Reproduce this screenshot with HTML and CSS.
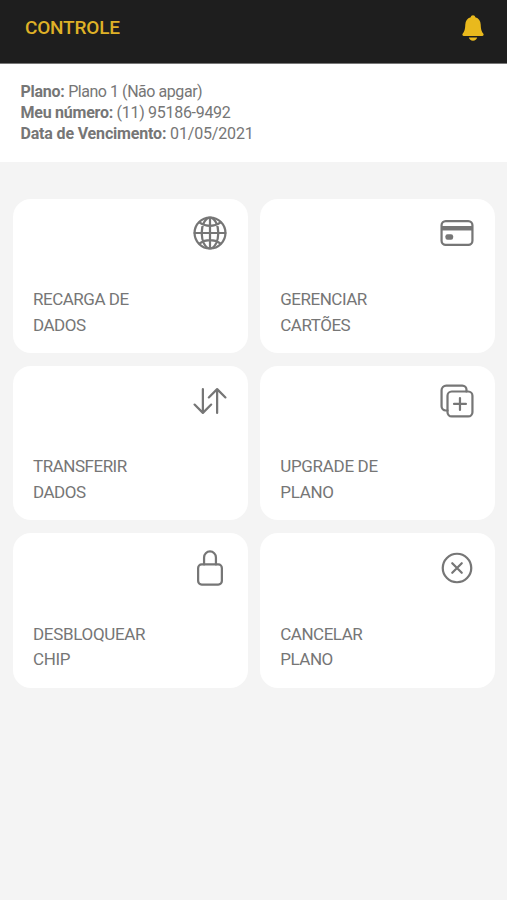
FILE: index.html
```html
<!DOCTYPE html>
<html lang="pt-BR">
<head>
  <meta charset="UTF-8">
  <meta name="viewport" content="width=device-width, initial-scale=1.0">
  <title>Controle</title>
  <link rel="stylesheet" href="styles.css">
</head>
<body>
  <header class="header">
    <h1>CONTROLE</h1>
    <svg class="bell" viewBox="0 0 24 28">
      <path d="M12 1.300c1.300 0 2.100.8 2.300 1.900 3.600 1 5.200 3.800 5.400 7.300.2 5.200.9 6.900 2.500 9 .8 1.100.5 2.400-1.100 2.400H2.900c-1.600 0-1.900-1.300-1.100-2.400 1.600-2.100 2.300-3.800 2.500-9 .2-3.500 1.800-6.300 5.400-7.300C9.900 2.100 10.700 1.300 12 1.300z"/>
      <path d="M7.800 23.500h8.400c-.5 1.900-2.100 3.300-4.200 3.300s-3.700-1.400-4.200-3.300z"/>
    </svg>
  </header>

  <!-- Dados do plano -->
  <section class="info">
    <p class="plano"><strong>Plano:</strong> Plano 1 (Não apgar)</p>
    <p class="numero"><strong>Meu número:</strong> (11) 95186-9492</p>
    <p class="vencimento"><strong>Data de Vencimento:</strong> 01/05/2021</p>
  </section>

  <!-- Menu -->
  <main class="menu">
    <a class="card">
      <svg class="icon" viewBox="0 0 512 512">
        <circle cx="256" cy="256" r="208"/>
        <path d="M256 48c-58 0-112 93-112 208s54 208 112 208 112-93 112-208S314 48 256 48zM117 117c38 27 87 43 139 43s101-16 139-43M395 395c-38-27-87-43-139-43s-101 16-139 43M256 48v416M464 256H48"/>
      </svg>
      <span>RECARGA DE<br>DADOS</span>
    </a>
    <a class="card">
      <svg class="icon" viewBox="0 0 512 512">
        <rect x="48" y="96" width="416" height="320" rx="56"/>
        <path class="stripe" d="M48 192h416"/>
        <path class="stripe chip" d="M128 300h48v20h-48z"/>
      </svg>
      <span>GERENCIAR<br>CARTÕES</span>
    </a>
    <a class="card">
      <svg class="icon" viewBox="0 0 512 512">
        <path d="M464 208L352 96 240 208M352 113v303M48 304l112 112 112-112M160 398V96"/>
      </svg>
      <span>TRANSFERIR<br>DADOS</span>
    </a>
    <a class="card wide">
      <svg class="icon" viewBox="0 0 512 512">
        <rect x="128" y="128" width="336" height="336" rx="57"/>
        <path d="M383 128l1-24a56 56 0 0 0-56-56H112a64 64 0 0 0-64 64v216a56 56 0 0 0 56 56h24M296 216v160M376 296H216"/>
      </svg>
      <span>UPGRADE DE<br>PLANO</span>
    </a>
    <a class="card wide">
      <svg class="icon" viewBox="0 0 512 512">
        <path d="M336 208v-95a80 80 0 0 0-160 0v95"/>
        <rect x="96" y="208" width="320" height="272" rx="48"/>
      </svg>
      <span>DESBLOQUEAR<br>CHIP</span>
    </a>
    <a class="card">
      <svg class="icon" viewBox="0 0 512 512">
        <circle cx="256" cy="256" r="192"/>
        <path d="M320 320L192 192M192 320l128-128"/>
      </svg>
      <span>CANCELAR<br>PLANO</span>
    </a>
  </main>
</body>
</html>
```

FILE: styles.css
```css
* {
  box-sizing: border-box;
}

body {
  margin: 0;
  min-height: 100vh;
  background-color: #f4f4f4;
  color: #767676;
  font-family: Roboto, "Liberation Sans", sans-serif;
}

.header {
  display: flex;
  justify-content: space-between;
  height: 63.5px;
  padding: 14px 22px 0 25px;
  background-color: #1e1e1e;
  border-bottom: 1px solid #777;
}

.header h1 {
  margin: 2px 0 0;
  color: #dfb127;
  font-size: 19px;
  font-weight: 500;
  line-height: 23px;
  letter-spacing: -0.2px;
}

.bell {
  width: 24px;
  height: 28px;
  fill: #e9b91d;
}

.info {
  height: 98px;
  padding: 17px 20.5px 0;
  background-color: #fff;
}

.info p {
  margin: 0;
  font-size: 16px;
  line-height: 21.4px;
}

.info strong {
  letter-spacing: -0.25px;
}

.plano {
  letter-spacing: -0.45px;
}

.numero {
  letter-spacing: -0.3px;
}

.vencimento,
.info .vencimento strong {
  letter-spacing: -0.17px;
}

.menu {
  display: grid;
  grid-template-columns: 1fr 1fr;
  grid-auto-rows: 154.3px;
  gap: 13px 12.5px;
  padding: 37.3px 12px 0 13px;
}

.card {
  display: flex;
  flex-direction: column;
  justify-content: space-between;
  padding: 15.5px 19px 15px 20px;
  background-color: #fff;
  border-radius: 18px;
  font-size: 17px;
  line-height: 25.6px;
  letter-spacing: -0.48px;
}

.card.wide {
  letter-spacing: -0.32px;
}

.icon {
  align-self: flex-end;
  width: 38px;
  height: 38px;
  fill: none;
  stroke: #767676;
  stroke-width: 30;
  stroke-linecap: round;
  stroke-linejoin: round;
}

.icon .stripe {
  stroke-width: 60;
  stroke-linecap: butt;
}

.icon .chip {
  stroke-width: 56;
}
```
